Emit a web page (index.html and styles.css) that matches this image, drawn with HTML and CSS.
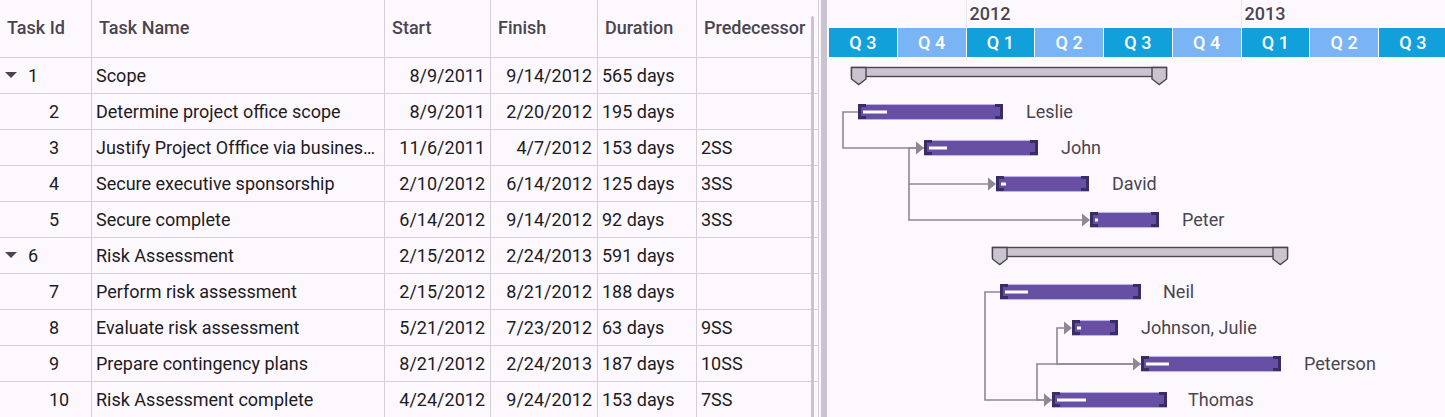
FILE: index.html
```html
<!DOCTYPE html>
<html>
<head>
<meta charset="utf-8">
<link rel="stylesheet" href="styles.css">
</head>
<body>
<div class="gantt">
  <div class="grid">
    <div class="row head">
      <div class="cell">Task Id</div>
      <div class="cell">Task Name</div>
      <div class="cell">Start</div>
      <div class="cell">Finish</div>
      <div class="cell">Duration</div>
      <div class="cell">Predecessor</div>
      <div class="cell gutter"></div>
    </div>
    <div class="row">
      <div class="cell tid"><span class="caret"></span>1</div>
      <div class="cell"><span class="txt">Scope</span></div>
      <div class="cell date">8/9/2011</div>
      <div class="cell date">9/14/2012</div>
      <div class="cell">565 days</div>
      <div class="cell"></div>
      <div class="cell gutter"></div>
    </div>
    <div class="row">
      <div class="cell tid child">2</div>
      <div class="cell"><span class="txt">Determine project office scope</span></div>
      <div class="cell date">8/9/2011</div>
      <div class="cell date">2/20/2012</div>
      <div class="cell">195 days</div>
      <div class="cell"></div>
      <div class="cell gutter"></div>
    </div>
    <div class="row">
      <div class="cell tid child">3</div>
      <div class="cell"><span class="txt">Justify Project Offfice via business case</span></div>
      <div class="cell date">11/6/2011</div>
      <div class="cell date">4/7/2012</div>
      <div class="cell">153 days</div>
      <div class="cell">2SS</div>
      <div class="cell gutter"></div>
    </div>
    <div class="row">
      <div class="cell tid child">4</div>
      <div class="cell"><span class="txt">Secure executive sponsorship</span></div>
      <div class="cell date">2/10/2012</div>
      <div class="cell date">6/14/2012</div>
      <div class="cell">125 days</div>
      <div class="cell">3SS</div>
      <div class="cell gutter"></div>
    </div>
    <div class="row">
      <div class="cell tid child">5</div>
      <div class="cell"><span class="txt">Secure complete</span></div>
      <div class="cell date">6/14/2012</div>
      <div class="cell date">9/14/2012</div>
      <div class="cell">92 days</div>
      <div class="cell">3SS</div>
      <div class="cell gutter"></div>
    </div>
    <div class="row">
      <div class="cell tid"><span class="caret"></span>6</div>
      <div class="cell"><span class="txt">Risk Assessment</span></div>
      <div class="cell date">2/15/2012</div>
      <div class="cell date">2/24/2013</div>
      <div class="cell">591 days</div>
      <div class="cell"></div>
      <div class="cell gutter"></div>
    </div>
    <div class="row">
      <div class="cell tid child">7</div>
      <div class="cell"><span class="txt">Perform risk assessment</span></div>
      <div class="cell date">2/15/2012</div>
      <div class="cell date">8/21/2012</div>
      <div class="cell">188 days</div>
      <div class="cell"></div>
      <div class="cell gutter"></div>
    </div>
    <div class="row">
      <div class="cell tid child">8</div>
      <div class="cell"><span class="txt">Evaluate risk assessment</span></div>
      <div class="cell date">5/21/2012</div>
      <div class="cell date">7/23/2012</div>
      <div class="cell">63 days</div>
      <div class="cell">9SS</div>
      <div class="cell gutter"></div>
    </div>
    <div class="row">
      <div class="cell tid child">9</div>
      <div class="cell"><span class="txt">Prepare contingency plans</span></div>
      <div class="cell date">8/21/2012</div>
      <div class="cell date">2/24/2013</div>
      <div class="cell">187 days</div>
      <div class="cell">10SS</div>
      <div class="cell gutter"></div>
    </div>
    <div class="row">
      <div class="cell tid child">10</div>
      <div class="cell"><span class="txt">Risk Assessment complete</span></div>
      <div class="cell date">4/24/2012</div>
      <div class="cell date">9/24/2012</div>
      <div class="cell">153 days</div>
      <div class="cell">7SS</div>
      <div class="cell gutter"></div>
    </div>
    <div class="thumb"></div>
  </div>
  <div class="splitter"></div>
  <div class="chart">
    <div class="years">
      <div class="year first"></div>
      <div class="year">2012</div>
      <div class="year">2013</div>
    </div>
    <div class="quarters">
      <div class="q dark">Q 3</div>
      <div class="q light">Q 4</div>
      <div class="q dark">Q 1</div>
      <div class="q light">Q 2</div>
      <div class="q dark">Q 3</div>
      <div class="q light">Q 4</div>
      <div class="q dark">Q 1</div>
      <div class="q light">Q 2</div>
      <div class="q dark">Q 3</div>
    </div>
    <svg class="chart-body" width="617" height="360" viewBox="0 0 617 360">
      <g transform="translate(-828,-57)">
        <!-- connectors -->
        <g class="conn">
          <path d="M858 112 H843 V148 H917"/>
          <path d="M924 148 H909 V184 H989"/>
          <path d="M909 184 V220 H1083"/>
          <path d="M1000 292 H985 V400 H1045"/>
          <path d="M1052 400 H1037 V364 H1134"/>
          <path d="M1141 364 H1057 V328 H1065"/>
        </g>
        <g class="arrow">
          <polygon points="916,141.5 924,148 916,154.5"/>
          <polygon points="988,177.5 996,184 988,190.5"/>
          <polygon points="1082,213.5 1090,220 1082,226.5"/>
          <polygon points="1044,393.5 1052,400 1044,406.5"/>
          <polygon points="1133,357.5 1141,364 1133,370.5"/>
          <polygon points="1064,321.5 1072,328 1064,334.5"/>
        </g>

        <!-- parent: Scope -->
        <g class="summary">
          <rect x="851.5" y="67.5" width="315" height="9"/>
          <polygon points="851.5,67.5 866,67.5 866,79 858.75,84.5 851.5,79"/>
          <polygon points="1152,67.5 1166.5,67.5 1166.5,79 1159.25,84.5 1152,79"/>
        </g>
        <!-- parent: Risk Assessment -->
        <g class="summary">
          <rect x="992.5" y="247.5" width="295" height="9"/>
          <polygon points="992.5,247.5 1007,247.5 1007,259 999.75,264.5 992.5,259"/>
          <polygon points="1273,247.5 1287.5,247.5 1287.5,259 1280.25,264.5 1273,259"/>
        </g>

        <!-- Leslie -->
        <g class="task">
          <rect class="bar" x="858.5" y="104.5" width="144" height="15"/>
          <path class="cap" d="M858 104 h8 v3 h-5 v9 h5 v3 h-8 z"/>
          <path class="cap" d="M1003 104 h-8 v3 h5 v9 h-5 v3 h8 z"/>
          <rect class="prog" x="863" y="110.5" width="24" height="3"/>
          <text x="1026" y="118">Leslie</text>
        </g>
        <!-- John -->
        <g class="task">
          <rect class="bar" x="924.5" y="140.5" width="113" height="15"/>
          <path class="cap" d="M924 140 h8 v3 h-5 v9 h5 v3 h-8 z"/>
          <path class="cap" d="M1038 140 h-8 v3 h5 v9 h-5 v3 h8 z"/>
          <rect class="prog" x="929" y="146.5" width="18" height="3"/>
          <text x="1061" y="154">John</text>
        </g>
        <!-- David -->
        <g class="task">
          <rect class="bar" x="996.5" y="176.5" width="92" height="15"/>
          <path class="cap" d="M996 176 h8 v3 h-5 v9 h5 v3 h-8 z"/>
          <path class="cap" d="M1089 176 h-8 v3 h5 v9 h-5 v3 h8 z"/>
          <rect class="prog" x="1001" y="182.5" width="5" height="3"/>
          <text x="1112" y="190">David</text>
        </g>
        <!-- Peter -->
        <g class="task">
          <rect class="bar" x="1090.5" y="212.5" width="68" height="15"/>
          <path class="cap" d="M1090 212 h8 v3 h-5 v9 h5 v3 h-8 z"/>
          <path class="cap" d="M1159 212 h-8 v3 h5 v9 h-5 v3 h8 z"/>
          <rect class="prog" x="1095" y="218.5" width="3" height="3"/>
          <text x="1182" y="226">Peter</text>
        </g>
        <!-- Neil -->
        <g class="task">
          <rect class="bar" x="1000.5" y="284.5" width="140" height="15"/>
          <path class="cap" d="M1000 284 h8 v3 h-5 v9 h5 v3 h-8 z"/>
          <path class="cap" d="M1141 284 h-8 v3 h5 v9 h-5 v3 h8 z"/>
          <rect class="prog" x="1005" y="290.5" width="23" height="3"/>
          <text x="1163" y="298">Neil</text>
        </g>
        <!-- Johnson, Julie -->
        <g class="task">
          <rect class="bar" x="1072.5" y="320.5" width="45" height="15"/>
          <path class="cap" d="M1072 320 h8 v3 h-5 v9 h5 v3 h-8 z"/>
          <path class="cap" d="M1118 320 h-8 v3 h5 v9 h-5 v3 h8 z"/>
          <rect class="prog" x="1077" y="326.5" width="4" height="3"/>
          <text x="1141" y="334">Johnson, Julie</text>
        </g>
        <!-- Peterson -->
        <g class="task">
          <rect class="bar" x="1141.5" y="356.5" width="139" height="15"/>
          <path class="cap" d="M1141 356 h8 v3 h-5 v9 h5 v3 h-8 z"/>
          <path class="cap" d="M1281 356 h-8 v3 h5 v9 h-5 v3 h8 z"/>
          <rect class="prog" x="1146" y="362.5" width="23" height="3"/>
          <text x="1304" y="370">Peterson</text>
        </g>
        <!-- Thomas -->
        <g class="task">
          <rect class="bar" x="1052.5" y="392.5" width="114" height="15"/>
          <path class="cap" d="M1052 392 h8 v3 h-5 v9 h5 v3 h-8 z"/>
          <path class="cap" d="M1167 392 h-8 v3 h5 v9 h-5 v3 h8 z"/>
          <rect class="prog" x="1057" y="398.5" width="29" height="3"/>
          <text x="1188" y="406">Thomas</text>
        </g>
      </g>
    </svg>
  </div>
</div>
</body>
</html>
```

FILE: styles.css
```css
* {
  box-sizing: border-box;
}

body {
  margin: 0;
  background: #fdf8fd;
  font-family: Roboto, "Liberation Sans", sans-serif;
  font-size: 18px;
  color: #1c1b1f;
}

.gantt {
  display: flex;
  height: 417px;
  overflow: hidden;
}

/* ---------- grid ---------- */
.grid {
  position: relative;
  flex: none;
  width: 819px;
  border-right: 1px solid #d3ced8;
  overflow: hidden;
}

.row {
  display: grid;
  grid-template-columns: 92px 293px 106px 107px 99px 115px 6px;
  height: 36px;
  border-bottom: 1px solid #d3ced8;
}

.row.head {
  height: 58px;
}

.cell {
  display: flex;
  align-items: center;
  min-width: 0;
  padding: 0 4px;
  white-space: nowrap;
  overflow: hidden;
  border-right: 1px solid #d3ced8;
}

.cell:nth-child(n+6) {
  border-right: none;
}

.head .cell {
  padding: 0 7px 2px;
  font-weight: 500;
  color: #49454f;
}

.head .cell.gutter,
.cell.gutter {
  padding: 0;
}

.txt {
  overflow: hidden;
  text-overflow: ellipsis;
}

.cell.date {
  justify-content: flex-end;
  padding-right: 5px;
}

.cell.tid {
  padding-left: 5px;
}

.cell.tid.child {
  padding-left: 49px;
}

.caret {
  width: 0;
  height: 0;
  border-left: 6px solid transparent;
  border-right: 6px solid transparent;
  border-top: 6px solid #49454f;
  margin-right: 11px;
  margin-top: -1px;
}

.thumb {
  position: absolute;
  left: 811px;
  top: 16px;
  width: 3px;
  height: 420px;
  border-radius: 2px;
  background: #c9c4cf;
}

/* ---------- splitter ---------- */
.splitter {
  flex: none;
  width: 6px;
  margin: 0 1px 0 2px;
  background: #cac4d0;
}

/* ---------- chart ---------- */
.chart {
  flex: none;
  width: 617px;
  overflow: hidden;
}

.years {
  display: flex;
  height: 28px;
}

.year {
  flex: none;
  width: 275px;
  display: flex;
  align-items: center;
  padding: 0 0 2px 3px;
  border-left: 1px solid #ece7ef;
  font-weight: 500;
  color: #49454f;
}

.year.first {
  width: 137.5px;
  border-left: none;
}

.quarters {
  display: flex;
  height: 29px;
}

.q {
  flex: none;
  width: 68.75px;
  display: flex;
  align-items: center;
  justify-content: center;
  border-left: 1px solid #fdf8fd;
  color: #ffffff;
  font-weight: 500;
}

.q.dark {
  background: #12a0da;
}

.q.light {
  background: #7ab4f5;
}

.chart-body {
  display: block;
}

.conn path {
  fill: none;
  stroke: #8d8892;
  stroke-width: 1.6;
}

.arrow polygon {
  fill: #8d8892;
}

.summary rect,
.summary polygon {
  fill: #c9c4ce;
  stroke: #4a4550;
  stroke-width: 1.4;
}

.task .bar {
  fill: #6750a4;
  stroke: #bfb1ea;
  stroke-width: 1;
}

.task .cap {
  fill: #3a2d66;
}

.task .prog {
  fill: #ffffff;
}

.task text {
  font-family: Roboto, "Liberation Sans", sans-serif;
  font-size: 18px;
  fill: #49454f;
}
```
